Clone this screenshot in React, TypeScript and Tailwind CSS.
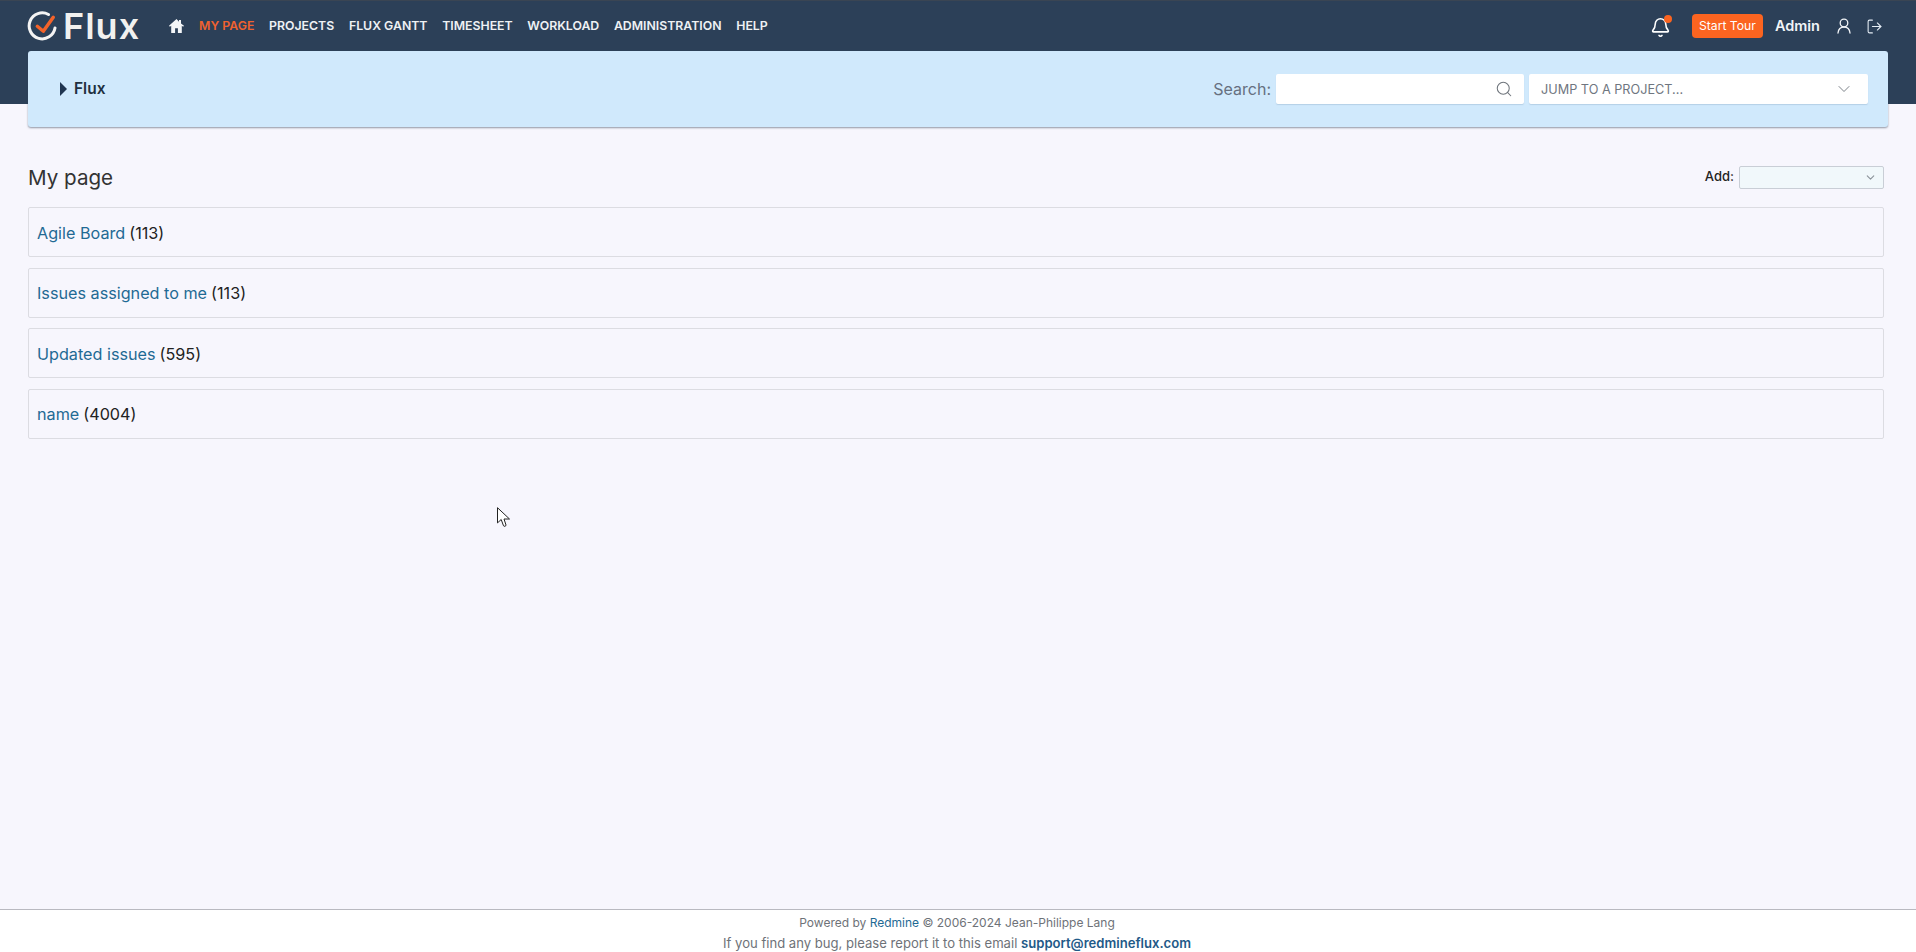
import { Bell, ChevronDown, LogOut, Search } from "lucide-react";

const navItems = ["PROJECTS", "FLUX GANTT", "TIMESHEET", "WORKLOAD", "ADMINISTRATION", "HELP"];

const blocks = [
  { title: "Agile Board", count: 113 },
  { title: "Issues assigned to me", count: 113 },
  { title: "Updated issues", count: 595 },
  { title: "name", count: 4004 },
];

const Logo = () => (
  <div className="flex items-center">
    <svg width="30" height="30" viewBox="0 0 30 30" fill="none" className="shrink-0">
      <path d="M21.5 3.5A13 13 0 1 0 28 17" stroke="#f4f4f4" strokeWidth="3" strokeLinecap="round" />
      <path d="M10.3 15.3l6 5 10-14" stroke="#f4632a" strokeWidth="3.4" strokeLinecap="round" strokeLinejoin="round" />
    </svg>
    <span className="ml-[6px] text-[36px] leading-none font-semibold tracking-[1px] text-[#f1f1ef]">Flux</span>
  </div>
);

const App = () => {
  return (
    <div className="relative flex h-screen flex-col overflow-hidden bg-[#f7f6fd] font-[Inter,sans-serif]">
      <header className="h-[104px] shrink-0 border-t border-[#3a4553] bg-[#2c4058]">
        <div className="flex h-[50px] items-center pl-[27px] pr-[33px]">
          <Logo />
          <svg width="15" height="14" viewBox="0 0 15 14" className="ml-[29px] shrink-0" fill="#f4f6f8">
            <path d="M7.5 0L0 6.8l.9 1L2.2 6.700V14h3.900V9.300h2.800V14h3.900V6.700l1.300 1.100.9-1L12 4.600V1h-2v1.800z" />
          </svg>
          <nav className="ml-[15px] flex items-center gap-[14.700px] text-[12.300px] font-semibold">
            <a className="text-[#f0622f]">MY PAGE</a>
            {navItems.map((item) => (
              <a key={item} className="text-[#eef1f4]">
                {item}
              </a>
            ))}
          </nav>
          <div className="ml-auto flex items-center">
            <div className="relative mt-[2px]">
              <Bell className="h-[21px] w-[21px] text-white" strokeWidth={1.8} />
              <span className="absolute -right-[1px] -top-[2px] h-[8px] w-[8px] rounded-full bg-[#fb6420]" />
            </div>
            <button className="ml-[21px] h-[24px] w-[71px] rounded-[4px] bg-[#fb6420] text-[12.200px] text-white">Start Tour</button>
            <span className="ml-[12px] text-[14.500px] font-semibold text-[#f1f4f7]">Admin</span>
            <svg width="16" height="16" viewBox="0 0 16 16" fill="none" stroke="#f1f4f7" strokeWidth="1.300" strokeLinecap="round" className="ml-[16px]">
              <circle cx="8" cy="5" r="3.800" />
              <path d="M2 15c.4-3.600 2.700-6 6-6s5.600 2.400 6 6" />
            </svg>
            <LogOut className="ml-[14px] h-[17px] w-[17px] text-[#e6eef6]" strokeWidth={1.5} />
          </div>
        </div>

        <div className="ml-[28px] flex h-[76px] w-[1860px] items-center justify-between rounded-[3px] bg-[#d0e9fc] pl-[32px] pr-[20px] shadow-[0_1px_2px_rgba(60,70,90,0.55)]">
          <div className="flex items-center gap-[7px]">
            <span className="h-0 w-0 border-y-[7px] border-l-[7px] border-y-transparent border-l-[#1f3550]" />
            <span className="text-[15.5px] font-semibold text-[#22303f]">Flux</span>
          </div>
          <div className="flex items-center">
            <span className="mr-[5px] text-[16px] text-[#667080]">Search:</span>
            <div className="flex h-[30px] w-[248px] items-center justify-end rounded-[2px] bg-white pr-[11px] shadow-[0_1px_1px_rgba(120,150,180,0.3)]">
              <Search className="h-[18px] w-[18px] text-[#6f757c]" strokeWidth={1.400} />
            </div>
            <div className="ml-[5px] flex h-[30px] w-[339px] items-center justify-between rounded-[2px] bg-white pl-[12px] pr-[14px] shadow-[0_1px_1px_rgba(120,150,180,0.3)]">
              <span className="pt-[1px] text-[12.700px] text-[#6f7680]">JUMP TO A PROJECT...</span>
              <ChevronDown className="h-[20px] w-[20px] text-[#70767e]" strokeWidth={1.100} />
            </div>
          </div>
        </div>
      </header>

      <main className="flex-1 pl-[28px] pr-[32px] pt-[62px]">
        <div className="mb-[19px] flex h-[22px] items-center justify-between">
          <h2 className="mt-[2px] text-[20.600px] font-normal text-[#333]">My page</h2>
          <div className="flex items-center gap-[5px]">
            <span className="text-[13px] font-medium text-[#222]">Add:</span>
            <div className="flex h-[23px] w-[145px] items-center justify-end rounded-[2px] border border-[#c9ced6] bg-[#f1f8fb] pr-[6px]">
              <ChevronDown className="h-[13px] w-[13px] text-[#8b9299]" />
            </div>
          </div>
        </div>
        <div className="flex flex-col gap-[10.500px]">
          {blocks.map((block) => (
            <div key={block.title} className="flex h-[50px] items-center rounded-[2px] border border-[#dcdce2] px-[8px] pt-[2px] text-[16.200px]">
              <a className="text-[#1f6a94]">{block.title}</a>
              <span className="ml-[4px] text-[#222]">({block.count})</span>
            </div>
          ))}
        </div>
      </main>

      <footer className="h-[43px] shrink-0 border-t border-[#b9b9c0] bg-white pr-[2px] pt-[3px] text-center text-[#6e7278]">
        <p className="text-[12px] leading-[20px]">
          Powered by <a className="text-[#1f6a94]">Redmine</a> © 2006-2024 Jean-Philippe Lang
        </p>
        <p className="text-[13.100px] leading-[20px]">
          If you find any bug, please report it to this email <a className="font-semibold text-[#1f5a88]">support@redmineflux.com</a>
        </p>
      </footer>

      <svg width="14" height="21" viewBox="0 0 14 21" className="absolute left-[497px] top-[507px]" fill="#fff" stroke="#222" strokeWidth="1">
        <path d="M.5.700v15.200l3.700-3.400 2.300 6.300c.400 1 2.800.400 2.500-.800L7 12h5.500z" />
      </svg>
    </div>
  );
};

export default App;
